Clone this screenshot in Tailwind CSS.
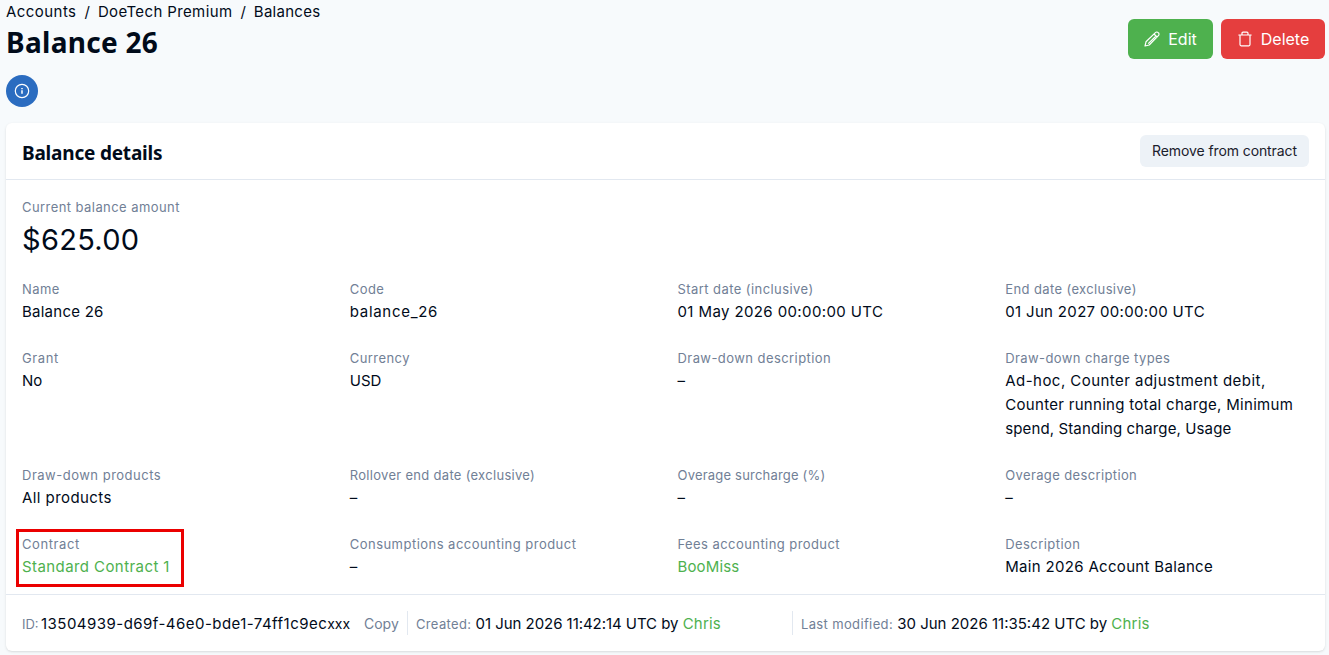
<!DOCTYPE html>
<html lang="en">
<head>
  <meta charset="UTF-8">
  <meta name="viewport" content="width=device-width, initial-scale=1">
  <title>Balance 26</title>
  <script src="https://cdn.jsdelivr.net/npm/@tailwindcss/browser@4"></script>
</head>
<body class="bg-[#f7fafc] text-[#010b1a] font-['Inter',sans-serif] text-[15px] leading-6 h-[655px] overflow-hidden pl-1.5 pr-1">

<header class="flex justify-between h-[123px]">
  <div>
    <nav class="flex gap-2 h-6">
      <a href="#" class="tracking-[0.45px]">Accounts</a>
      <span>/</span>
      <a href="#" class="tracking-[0.38px]">DoeTech Premium</a>
      <span>/</span>
      <a href="#" class="tracking-[0.27px]">Balances</a>
    </nav>
    <h1 class="font-['Noto_Sans',sans-serif] font-bold text-[28px] leading-9 tracking-[0.3px]">Balance 26</h1>
    <button class="mt-[15px] size-8 rounded-full bg-[#2b6cc0] text-white flex items-center justify-center">
      <svg class="size-4" viewBox="0 0 16 16" fill="none" stroke="currentColor" stroke-width="1.2"><circle cx="8" cy="8" r="6.7"/><path d="M8 7.3v3.5M8 5.1v1.1" stroke-width="1.5"/></svg>
    </button>
  </div>
  <div class="flex gap-2 mt-[19px] h-10 text-white text-base">
    <button class="w-[85px] rounded-md bg-[#4eb14e] flex items-center justify-center gap-2">
      <svg class="size-4" viewBox="0 0 16 16" fill="none" stroke="currentColor" stroke-width="1.2" stroke-linejoin="round"><path d="M1 15l1-4.2L11.4 1.6a1.9 1.9 0 0 1 2.8 0l.2.2a1.9 1.9 0 0 1 0 2.8L5.2 14 1 15zM10 3l3 3M12 5L4.2 12.6"/></svg>
      <span>Edit</span>
    </button>
    <button class="w-[104px] rounded-md bg-[#e53e3e] flex items-center justify-center gap-2">
      <svg class="size-4" viewBox="0 0 16 16" fill="none" stroke="currentColor" stroke-width="1.2" stroke-linejoin="round" stroke-linecap="round"><path d="M1.8 4h12.4M5 4V2.3C5 1.6 5.4 1.2 6 1.2h4c.6 0 1 .4 1 1.1V4M3 4v9.6c0 .7.4 1.2 1.1 1.2h7.8c.7 0 1.1-.5 1.1-1.2V4"/></svg>
      <span>Delete</span>
    </button>
  </div>
</header>

<main class="bg-white rounded-md shadow h-[528px]">
  <div class="flex items-center justify-between h-[57px] px-4 border-b border-[#e2e8f0]">
    <h2 class="font-['Noto_Sans',sans-serif] font-bold text-[19px] tracking-[-0.2px] pt-1">Balance details</h2>
    <button class="w-[169px] h-8 rounded-md bg-[#edf2f7] text-[#1a202c] text-sm tracking-[-0.1px]">Remove from contract</button>
  </div>

  <div class="px-4 pt-[17px] h-[414px]">
    <div class="text-[13px] leading-[21px] tracking-[0.43px] text-[#718096]">Current balance amount</div>
    <div class="text-[29px] leading-[44px] tracking-[0.3px] h-[61px]">$625.00</div>

    <dl class="grid grid-cols-4 gap-6">
      <div><dt class="text-[13px] leading-[21px] tracking-[0.43px] text-[#718096]">Name</dt><dd class="tracking-[0.25px]">Balance 26</dd></div>
      <div><dt class="text-[13px] leading-[21px] tracking-[0.43px] text-[#718096]">Code</dt><dd class="tracking-[0.7px]">balance_26</dd></div>
      <div><dt class="text-[13px] leading-[21px] tracking-[0.43px] text-[#718096]">Start date (inclusive)</dt><dd class="tracking-[0.39px]">01 May 2026 00:00:00 UTC</dd></div>
      <div><dt class="text-[13px] leading-[21px] tracking-[0.38px] text-[#718096]">End date (exclusive)</dt><dd class="tracking-[0.33px]">01 Jun 2027 00:00:00 UTC</dd></div>

      <div><dt class="text-[13px] leading-[21px] tracking-[0.6px] text-[#718096]">Grant</dt><dd>No</dd></div>
      <div><dt class="text-[13px] leading-[21px] tracking-[0.43px] text-[#718096]">Currency</dt><dd>USD</dd></div>
      <div><dt class="text-[13px] leading-[21px] tracking-[0.43px] text-[#718096]">Draw-down description</dt><dd>–</dd></div>
      <div>
        <dt class="text-[13px] leading-[21px] tracking-[0.4px] text-[#718096]">Draw-down charge types</dt>
        <dd><span class="tracking-[0.46px]">Ad-hoc, Counter adjustment debit,</span><br><span class="tracking-[0.3px]">Counter running total charge, Minimum</span><br><span class="tracking-[0.12px]">spend, Standing charge, Usage</span></dd>
      </div>

      <div><dt class="text-[13px] leading-[21px] tracking-[0.5px] text-[#718096]">Draw-down products</dt><dd class="tracking-[0.43px]">All products</dd></div>
      <div><dt class="text-[13px] leading-[21px] tracking-[0.3px] text-[#718096]">Rollover end date (exclusive)</dt><dd>–</dd></div>
      <div><dt class="text-[13px] leading-[21px] tracking-[0.2px] text-[#718096]">Overage surcharge (%)</dt><dd>–</dd></div>
      <div><dt class="text-[13px] leading-[21px] tracking-[0.37px] text-[#718096]">Overage description</dt><dd>–</dd></div>

      <div class="relative">
        <div class="absolute -left-1.5 -top-[5px] w-[168px] h-[58px] border-3 border-[#eb0000]"></div>
        <dt class="text-[13px] leading-[21px] tracking-[0.6px] text-[#718096]">Contract</dt><dd class="tracking-[0.42px] text-[#4eb14e]">Standard Contract 1</dd>
      </div>
      <div><dt class="text-[13px] leading-[21px] tracking-[0.47px] text-[#718096]">Consumptions accounting product</dt><dd>–</dd></div>
      <div><dt class="text-[13px] leading-[21px] tracking-[0.43px] text-[#718096]">Fees accounting product</dt><dd class="tracking-[0.15px] text-[#4eb14e]">BooMiss</dd></div>
      <div><dt class="text-[13px] leading-[21px] tracking-[0.43px] text-[#718096]">Description</dt><dd class="tracking-[0.32px]">Main 2026 Account Balance</dd></div>
    </dl>
  </div>

  <footer class="flex items-center h-[57px] px-4 border-t border-[#e2e8f0] whitespace-nowrap">
    <div class="flex w-[385px] pt-0.5">
      <div class="flex w-[342px]"><span class="w-[19px] text-[13px] text-[#718096]">ID:</span><span class="tracking-[0.47px]">13504939-d69f-46e0-bde1-74ff1c9ec<span class="text-sm tracking-normal">xxx</span></span></div>
      <button class="text-sm text-[#718096]">Copy</button>
    </div>
    <div class="w-[385px] h-6 pl-2 border-l border-[#e2e8f0]"><div class="pt-px"><span class="text-[13px] tracking-[0.35px] text-[#718096]">Created:</span> <span class="tracking-[-0.05px]">01 Jun 2026 11:42:14 UTC by</span> <a href="#" class="tracking-[0.2px] text-[#4eb14e]">Chris</a></div></div>
    <div class="h-6 pl-2 border-l border-[#e2e8f0]"><div class="pt-px"><span class="text-[13px] tracking-[0.36px] text-[#718096]">Last modified:</span> 30 Jun 2026 11:35:42 UTC by <a href="#" class="tracking-[0.2px] text-[#4eb14e]">Chris</a></div></div>
  </footer>
</main>

</body>
</html>
